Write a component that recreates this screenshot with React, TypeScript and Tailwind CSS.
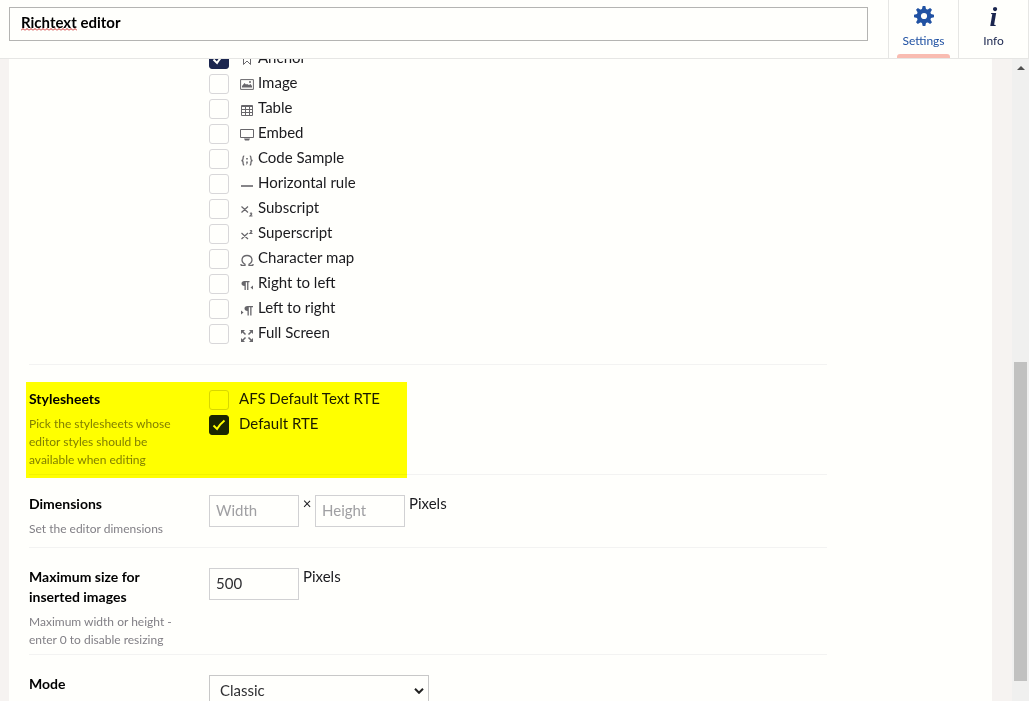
import type { ReactNode } from "react";

const toolbar: { id: string; label: string; checked?: boolean; icon: ReactNode }[] = [
  { id: "anchor", label: "Anchor", checked: true, icon: <path d="M3.5 1.5h7v11L7 9l-3.5 3.5z" /> },
  {
    id: "image",
    label: "Image",
    icon: (
      <>
        <path d="M.6 2.6h12.8v9.8H.6z" />
        <path d="M2 10.5V9l2.5-3L6 7.5 7 7l2 1 1.5-1 1.5 2v1.5z" fill="currentColor" stroke="none" />
        <circle cx="10" cy="5" r="1" fill="currentColor" stroke="none" />
      </>
    ),
  },
  { id: "table", label: "Table", icon: <path d="M1.5 3.5h11v10h-11zM1.5 4.5h11M1.5 7.5h11M1.5 10.5h11M5.5 3.5v10M9.5 3.5v10" /> },
  {
    id: "embed",
    label: "Embed",
    icon: (
      <>
        <path d="M.5 2.5h13v8H.5z" />
        <path d="M4 11.5h6l-1 2H5z" fill="currentColor" stroke="none" />
      </>
    ),
  },
  {
    id: "code",
    label: "Code Sample",
    icon: (
      <>
        <path d="M4.2 4C2.7 4 3.2 5.5 3 7c0 1-.6 1.5-1.6 1.5C2.4 8.500 3 9 3 10c.2 1.500-.3 3 1.200 3M9.800 4c1.500 0 1 1.500 1.200 3 0 1 .6 1.500 1.600 1.500-1 0-1.600.500-1.600 1.500-.2 1.500.3 3-1.200 3" strokeWidth="1.300" />
        <path d="M6.200 6h1.600v1.600H6.200zM6.200 9.400h1.600v1.600L6.800 12.500H6l.6-1.500h-.4z" fill="currentColor" stroke="none" />
      </>
    ),
  },
  { id: "hr", label: "Horizontal rule", icon: <path d="M1 9h12" strokeWidth="1.600" /> },
  { id: "sub", label: "Subscript", icon: <path d="M1.500 4.500l6.500 6M8 4.500l-6.500 6M10 11.500c.8-.8 2-.3 1.600.6L10 14h2.500" strokeWidth="1.200" /> },
  { id: "sup", label: "Superscript", icon: <path d="M1.500 6l6.500 6M8 6l-6.500 6M10 4c.8-.8 2-.3 1.600.6L10 6.500h2.500" strokeWidth="1.200" /> },
  { id: "charmap", label: "Character map", icon: <path d="M1 13.400h4v-1.200C.2 9.500 1.500 3.500 7 3.500s6.800 6 2 8.700v1.200h4M1 13.400v-1.500M13 13.400v-1.500" strokeWidth="1.300" /> },
  {
    id: "rtl",
    label: "Right to left",
    icon: (
      <>
        <path d="M9.500 4H4.500c-4 0-4 5 0 5V13h1.300V5.200h1.300V13h1.300V5.200h1.100z" fill="currentColor" stroke="none" />
        <path d="M13 8.500v4l-2.500-2z" fill="currentColor" stroke="none" />
      </>
    ),
  },
  {
    id: "ltr",
    label: "Left to right",
    icon: (
      <>
        <path d="M13 4H7.500c-4 0-4 5 0 5v4.500h1.300V5.200h1.400v8.300h1.300V5.200H13z" fill="currentColor" stroke="none" />
        <path d="M1 8.500v4l2.500-2z" fill="currentColor" stroke="none" />
      </>
    ),
  },
  {
    id: "fullscreen",
    label: "Full Screen",
    icon: (
      <>
        <path d="M2 4l3.500 3.500M12 4L8.500 7.500M2 14l3.500-3.500M12 14l-3.500-3.500" strokeWidth="1.500" />
        <path d="M1 3h4L1 7zM13 3H9l4 4zM1 15h4l-4-4zM13 15H9l4-4z" fill="currentColor" stroke="none" />
      </>
    ),
  },
];

const stylesheets = [
  { id: "afs", label: "AFS Default Text RTE", checked: false },
  { id: "default", label: "Default RTE", checked: true },
];

function GearIcon() {
  return (
    <svg viewBox="0 0 20 20" className="h-5 w-5" fill="currentColor" aria-hidden="true">
      {[0, 45, 90, 135, 180, 225, 270, 315].map((angle) => (
        <path key={angle} d="M8.700 0h2.600l1.200 5h-5z" transform={`rotate(${angle} 10 10)`} />
      ))}
      <circle cx="10" cy="10" r="5.200" fill="none" stroke="currentColor" strokeWidth="4.200" />
    </svg>
  );
}

function Check({ id, label, checked, icon }: { id: string; label: string; checked?: boolean; icon?: ReactNode }) {
  return (
    <li className="mb-[5px] flex h-5">
      <span className="grid h-5 w-5 shrink-0">
        <input
          id={id}
          type="checkbox"
          defaultChecked={checked}
          className="peer col-start-1 row-start-1 h-5 w-5 appearance-none rounded-[3px] border border-[#d8d7d9] checked:border-[#1b264f] checked:bg-[#1b264f]"
        />
        <svg viewBox="0 0 20 20" className="pointer-events-none invisible col-start-1 row-start-1 h-5 w-5 peer-checked:visible" fill="none" stroke="#fffffc" strokeWidth="2" aria-hidden="true">
          <path d="M4.500 10.500l3.500 3.500Q11 9 15.500 5.500" />
        </svg>
      </span>
      <label htmlFor={id} className={icon ? "ml-[11px] flex gap-1 leading-[16px]" : "ml-[10px] leading-[16px]"}>
        {icon && (
          <svg viewBox="0 0 14 16" className="mt-[3px] h-4 w-3.5 text-[#68676b]" fill="none" stroke="currentColor" aria-hidden="true">
            {icon}
          </svg>
        )}
        {label}
      </label>
    </li>
  );
}

function Property({ title, htmlFor, description, children }: { title: string; htmlFor?: string; description?: string; children: ReactNode }) {
  return (
    <section className="flex border-b border-[#f3f3f2]">
      <div className="w-[180px] shrink-0 pt-[19px] pr-[30px] pb-[5px]">
        <label htmlFor={htmlFor} className="block text-[14px] leading-[20px] font-bold text-black">
          {title}
        </label>
        {description && <p className="mt-[6px] text-[12px] leading-[18px] text-[#817f85]">{description}</p>}
      </div>
      <div className="flex flex-1 items-start py-5">{children}</div>
    </section>
  );
}

const numberBox = "h-8 w-[90px] border border-[#d1d1d3] bg-transparent px-[6px] pb-[3px] text-[15px] text-[#303033] placeholder:text-[#a0a0a3]";

export default function App() {
  return (
    <div className="flex h-screen flex-col overflow-hidden bg-[#fffffc] font-['Lato',sans-serif] text-[15px] text-[#1b1b1f]">
      <header className="flex h-[59px] shrink-0 border-b border-[#e6e6e4]">
        <div className="relative mt-[7px] ml-[9px] h-[34px] flex-1">
          <input aria-label="Name" defaultValue="Richtext editor" spellCheck={false} className="h-full w-full border border-[#b4b4b2] px-[11px] pb-[4px] text-[15px] font-bold text-black" />
          <svg className="absolute top-[21px] left-3 h-[3px] w-14" fill="none" stroke="#c8201e" aria-hidden="true">
            <defs>
              <pattern id="squiggle" width="4" height="3" patternUnits="userSpaceOnUse">
                <path d="M0 2.500L2 .5l2 2" />
              </pattern>
            </defs>
            <rect width="56" height="3" fill="url(#squiggle)" stroke="none" />
          </svg>
        </div>
        <nav className="ml-5 flex border-r border-[#e6e6e4] text-[12px]">
          <button className="relative flex w-[70px] flex-col items-center border-l border-[#e6e6e4] pt-[6px] text-[#2152a3]">
            <GearIcon />
            <span className="mt-[6px] leading-[18px]">Settings</span>
            <span className="absolute bottom-0 left-2 h-1 w-[53px] rounded-t-[3px] bg-[#f9bcb1]" />
          </button>
          <button className="flex w-[70px] flex-col items-center border-l border-[#e6e6e4] pt-[6px] text-[#1b264f]">
            <span className="h-5 font-['Liberation_Serif',serif] text-[28px] leading-[22px] font-bold italic" aria-hidden="true">
              i
            </span>
            <span className="mt-[6px] leading-[18px]">Info</span>
          </button>
        </nav>
      </header>

      <div className="flex min-h-0 flex-1 bg-[#f6f3f1]">
        <main className="ml-[9px] flex-1 overflow-hidden bg-[#fffffc] px-5">
          <div className="max-w-[798px]">
            <ul className="-mt-[10px] border-b border-[#f3f3f2] pb-[15px] pl-[180px]">
              {toolbar.map((item) => (
                <Check key={item.id} {...item} />
              ))}
            </ul>

            <div className="relative pt-[5px]">
              <Property title="Stylesheets" description="Pick the stylesheets whose editor styles should be available when editing">
                <ul>
                  {stylesheets.map((item) => (
                    <Check key={item.id} {...item} />
                  ))}
                </ul>
              </Property>
              {/* Highlighter mark */}
              <div className="pointer-events-none absolute top-[17px] -bottom-[3px] -left-[3px] w-[381px] bg-[#ffff00] mix-blend-multiply" />
            </div>

            <Property title="Dimensions" htmlFor="width" description="Set the editor dimensions">
              <input id="width" placeholder="Width" className={numberBox} />
              <span className="w-4 text-center leading-[16px]">×</span>
              <input aria-label="Height" placeholder="Height" className={numberBox} />
              <span className="ml-1 leading-[16px]">Pixels</span>
            </Property>

            <Property title="Maximum size for inserted images" htmlFor="max-size" description="Maximum width or height - enter 0 to disable resizing">
              <input id="max-size" defaultValue="500" className={numberBox} />
              <span className="ml-1 leading-[16px]">Pixels</span>
            </Property>

            <Property title="Mode" htmlFor="mode">
              <div className="relative">
                <select id="mode" className="h-8 w-[220px] appearance-none border border-[#c8c8c8] px-[10px] pb-[2px] text-[15px] text-[#303033]">
                  <option>Classic</option>
                  <option>Inline</option>
                </select>
                <svg viewBox="0 0 10 6" className="pointer-events-none absolute top-[13px] right-[5px] h-[6px] w-[10px]" fill="none" stroke="#222222" strokeWidth="2" aria-hidden="true">
                  <path d="M1 .8l4 4 4-4" />
                </svg>
              </div>
            </Property>
          </div>
        </main>

        <div className="ml-5 flex w-[17px] flex-col items-center bg-[#f0f0ef]" aria-hidden="true">
          <svg viewBox="0 0 8 4" className="mt-[7px] h-1 w-2 shrink-0" fill="#505050">
            <path d="M0 4l4-4 4 4z" />
          </svg>
          <div className="flex-[292]" />
          <div className="w-[13px] flex-[319] bg-[#c1c1c0]" />
          <div className="flex-[20]" />
        </div>
      </div>
    </div>
  );
}
